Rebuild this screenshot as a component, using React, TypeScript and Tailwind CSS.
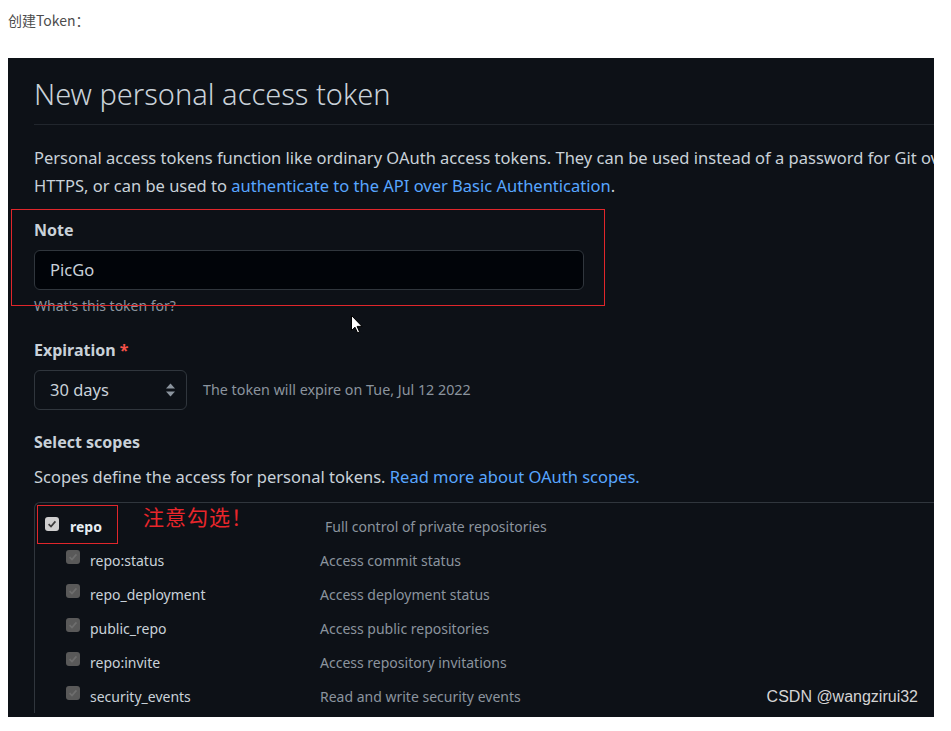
import React from "react";

const subScopes = [
  ["repo:status", "Access commit status"],
  ["repo_deployment", "Access deployment status"],
  ["public_repo", "Access public repositories"],
  ["repo:invite", "Access repository invitations"],
  ["security_events", "Read and write security events"],
];

function Check({ light }: { light?: boolean }) {
  return (
    <span
      className={
        "flex h-[14px] w-[14px] shrink-0 items-center justify-center rounded-[3px] " +
        (light ? "bg-[#cfcfcf]" : "bg-[#595959]")
      }
    >
      <svg width="10" height="10" viewBox="0 0 10 10">
        <path
          d="M1.6 5.2 L4 7.6 L8.4 2.4"
          fill="none"
          stroke={light ? "#3b3b3b" : "#6e6e6e"}
          strokeWidth="1.7"
        />
      </svg>
    </span>
  );
}

export default function App() {
  return (
    <div className="w-[951px] h-[731px] bg-white overflow-hidden font-['Noto_Sans',sans-serif]">
      <div className="h-[58px] pl-[8px] pt-[10px] text-[14px] leading-[20px] text-[#4d4d4d] font-['Noto_Sans_CJK_SC',sans-serif]">
        创建Token：
      </div>

      <div className="relative ml-[8px] w-[926px] h-[659px] overflow-hidden bg-[#0d1117] text-[#c9d1d9]">
        <div className="ml-[26px] w-[960px]">
          <h1 className="pt-[17px] pb-[12px] text-[29px] leading-[37px] font-light text-[#c9d1d9] border-b border-[#21262d]">
            New personal access token
          </h1>

          <p className="mt-[19px] text-[16.5px] leading-[28px] whitespace-nowrap">
            Personal access tokens function like ordinary OAuth access tokens. They can be used instead of a password for Git over
            <br />
            HTTPS, or can be used to{" "}
            <span className="text-[#58a6ff]">authenticate to the API over Basic Authentication</span>.
          </p>

          <div className="mt-[16px] text-[16px] leading-[28px] font-bold">Note</div>
          <div className="mt-[6px] flex h-[40px] w-[550px] items-center rounded-md border border-[#30363d] bg-[#010409] pl-[15px] text-[16.5px]">
            PicGo
          </div>
          <div className="mt-[6px] text-[14px] leading-[20px] text-[#8b949e]">What's this token for?</div>

          <div className="mt-[20px] text-[16px] leading-[28px] font-bold">
            Expiration <span className="text-[#f85149]">*</span>
          </div>
          <div className="mt-[6px] flex items-center">
            <div className="flex h-[40px] w-[153px] items-center justify-between rounded-md border border-[#30363d] bg-[#0d1117] pl-[15px] pr-[10px] text-[16.5px]">
              <span>30 days</span>
              <svg width="11" height="14" viewBox="0 0 11 14">
                <path d="M5.5 0.5 L10 5.5 L1 5.5 Z" fill="#8b949e" />
                <path d="M5.5 13.5 L10 8.5 L1 8.5 Z" fill="#8b949e" />
              </svg>
            </div>
            <div className="ml-[16px] text-[14.3px] text-[#8b949e]">The token will expire on Tue, Jul 12 2022</div>
          </div>

          <div className="mt-[18px] text-[16px] leading-[28px] font-bold">Select scopes</div>
          <p className="mt-[7px] text-[16.5px] leading-[28px] whitespace-nowrap">
            Scopes define the access for personal tokens.{" "}
            <span className="text-[#58a6ff]">Read more about OAuth scopes.</span>
          </p>

          <div className="mt-[11px] rounded-tl-md border-l border-t border-[#30363d] pt-[7px] text-[14px]">
            <div className="flex h-[33px] items-center pl-[10px]">
              <span className="-mt-[6px]">
                <Check light />
              </span>
              <span className="ml-[11px] w-[255px] font-bold text-[#e6edf3]">repo</span>
              <span className="text-[#8b949e]">Full control of private repositories</span>
            </div>
            {subScopes.map(([name, desc]) => (
              <div key={name} className="flex h-[34px] items-center pl-[31px]">
                <span className="-mt-[6px]">
                  <Check />
                </span>
                <span className="ml-[10px] w-[230px] text-[#c9d1d9]">{name}</span>
                <span className="text-[#8b949e]">{desc}</span>
              </div>
            ))}
          </div>
        </div>

        {/* annotations over the screenshot */}
        <div className="absolute left-[3px] top-[151px] h-[97px] w-[594px] border border-[#e0262b]" />
        <div className="absolute left-[29px] top-[447px] h-[39px] w-[81px] border border-[#e0262b]" />
        <div className="absolute left-[135px] top-[443px] text-[21px] leading-[30px] tracking-[1px] text-[#e8262b] font-['Noto_Sans_CJK_SC',sans-serif]">
          注意勾选！
        </div>
        <div className="absolute right-[16px] bottom-[9px] text-[16px] leading-[22px] text-[#d4d4d4] font-['Liberation_Sans',sans-serif]">
          CSDN @wangzirui32
        </div>
        <svg className="absolute left-[343px] top-[257px]" width="12" height="19" viewBox="0 0 12 19">
          <path d="M0.5 0.5 L0.5 15.5 L4 12.2 L6.6 18 L8.6 17.1 L6.1 11.4 L11 11.4 Z" fill="#ffffff" stroke="#000000" strokeWidth="1" />
        </svg>
      </div>
    </div>
  );
}
